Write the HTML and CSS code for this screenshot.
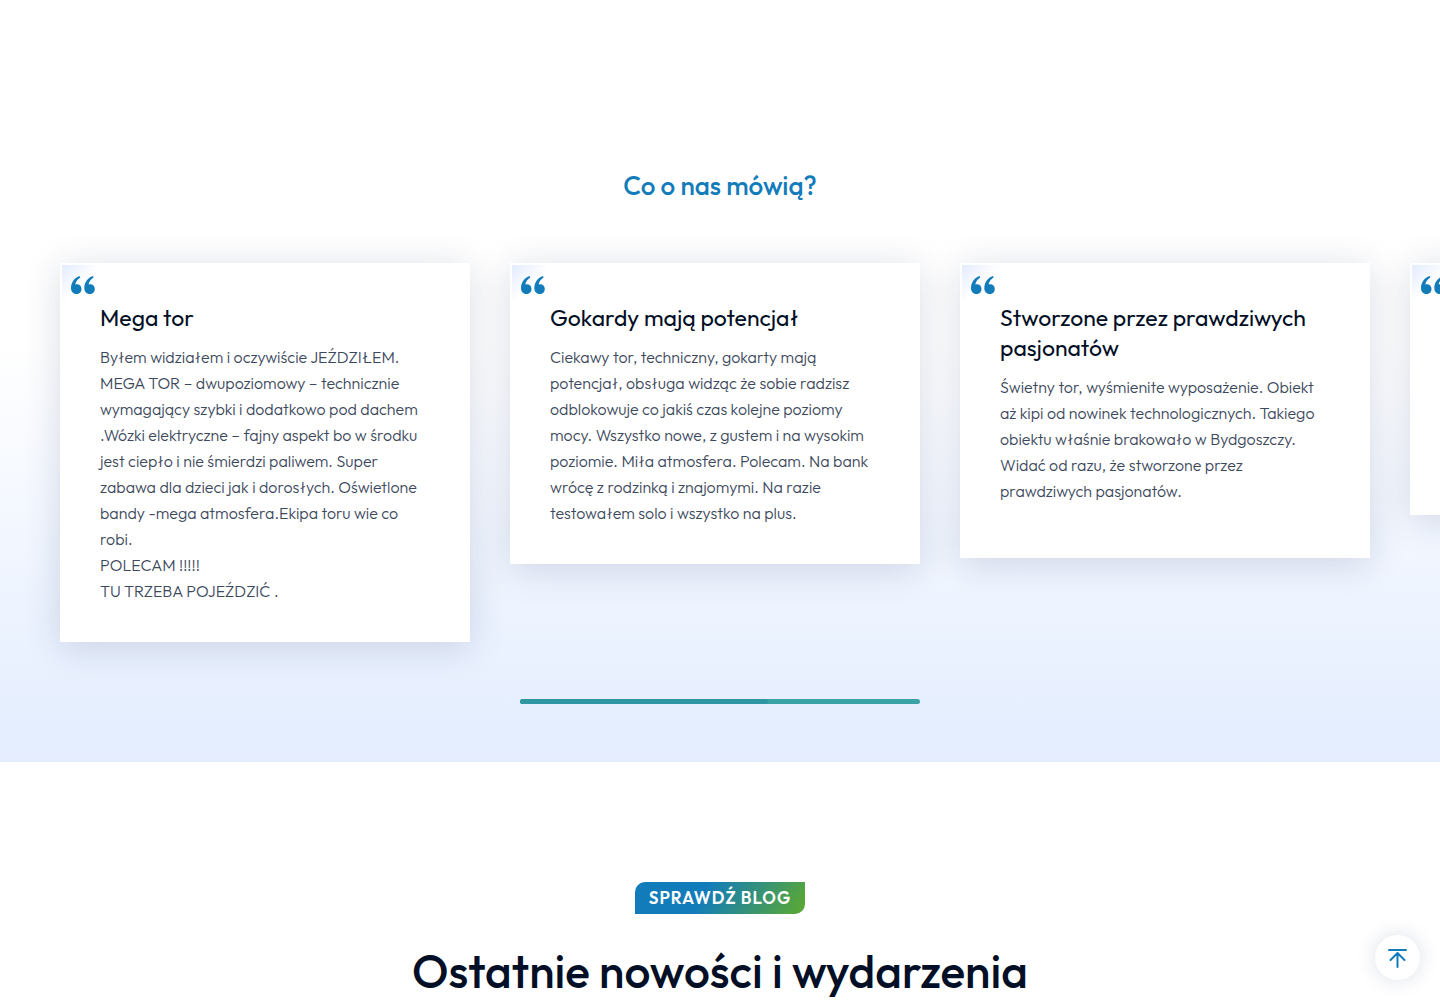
FILE: index.html
```html
<!DOCTYPE html>
<html lang="pl">

<head>
    <meta charset="UTF-8">
    <meta name="viewport" content="width=device-width, initial-scale=1">
    <title>Opinie i blog</title>
    <link rel="stylesheet" href="styles.css">
</head>

<body>

    <svg class="sprite" aria-hidden="true">
        <symbol id="quote" viewBox="0 0 24 18">
            <path d="M8.600 0C3.600 1.800 0 6.400 0 12c0 3.600 2.200 6 5.300 6 3 0 5.200-2.200 5.200-5.100 0-2.800-2-4.700-4.600-4.700-.5 0-1.100.1-1.600.3C4.800 5.800 6.600 3.200 9.300 1.500z" />
            <path d="M21.900 0C16.900 1.800 13.300 6.400 13.300 12c0 3.600 2.200 6 5.300 6 3 0 5.200-2.200 5.200-5.100 0-2.800-2-4.700-4.600-4.700-.5 0-1.100.1-1.600.3.5-2.700 2.300-5.300 5-7z" />
        </symbol>
    </svg>

    <!-- Opinie -->
    <section class="reviews">
        <h2 class="reviews-title">Co o nas mówią?</h2>

        <div class="slider">
            <article class="card">
                <span class="card-corner"><svg class="quote"><use href="#quote" /></svg></span>
                <h3 class="card-title">Mega tor</h3>
                <p class="card-text">Byłem widziałem i oczywiście JEŹDZIŁEM. MEGA TOR – dwupoziomowy – technicznie wymagający szybki i dodatkowo pod dachem .Wózki elektryczne – fajny aspekt bo w środku jest ciepło i nie śmierdzi paliwem. Super zabawa dla dzieci jak i dorosłych. Oświetlone bandy -mega atmosfera.Ekipa toru wie co robi.<br>
                    POLECAM !!!!!<br>
                    TU TRZEBA POJEŹDZIĆ .</p>
            </article>

            <article class="card">
                <span class="card-corner"><svg class="quote"><use href="#quote" /></svg></span>
                <h3 class="card-title">Gokardy mają potencjał</h3>
                <p class="card-text">Ciekawy tor, techniczny, gokarty mają potencjał, obsługa widząc że sobie radzisz odblokowuje co jakiś czas kolejne poziomy mocy. Wszystko nowe, z gustem i na wysokim poziomie. Miła atmosfera. Polecam. Na bank wrócę z rodzinką i znajomymi. Na razie testowałem solo i wszystko na plus.</p>
            </article>

            <article class="card">
                <span class="card-corner"><svg class="quote"><use href="#quote" /></svg></span>
                <h3 class="card-title">Stworzone przez prawdziwych pasjonatów</h3>
                <p class="card-text card-text-spaced">Świetny tor, wyśmienite wyposażenie. Obiekt aż kipi od nowinek technologicznych. Takiego obiektu właśnie brakowało w Bydgoszczy. Widać od razu, że stworzone przez prawdziwych pasjonatów.</p>
            </article>

            <article class="card">
                <span class="card-corner"><svg class="quote"><use href="#quote" /></svg></span>
            </article>
        </div>

        <div class="scrollbar">
            <div class="scrollbar-drag" style="width: 62%"></div>
        </div>
    </section>

    <!-- Blog -->
    <section class="blog">
        <span class="badge">SPRAWDŹ BLOG</span>
        <h2 class="blog-title">Ostatnie nowości i wydarzenia</h2>
    </section>

    <button class="to-top" type="button" aria-label="Do góry" onclick="window.scrollTo(0, 0)">
        <svg viewBox="0 0 20 20" width="20" height="20" fill="none" stroke="currentColor" stroke-width="2" stroke-linecap="round" stroke-linejoin="round">
            <path d="M2 2h17M10.500 19V5.500M3.500 12l7-7 7 7" />
        </svg>
    </button>

</body>

</html>
```

FILE: styles.css
```css
* {
    margin: 0;
    padding: 0;
    box-sizing: border-box;
}

body {
    font-family: Outfit, Lato, sans-serif;
    background: #fff;
    color: #020f26;
    overflow-x: hidden;
}

.sprite {
    display: none;
}

.reviews {
    padding: 168px 0 58px;
    background: linear-gradient(180deg, #fff 45%, #e3edff 100%);
    overflow: hidden;
}

.reviews-title {
    color: #127cbb;
    font-size: 26px;
    font-weight: 500;
    line-height: 36px;
    text-align: center;
}

.slider {
    display: flex;
    align-items: flex-start;
    gap: 40px;
    padding: 59px 60px 0;
}

.card {
    position: relative;
    flex: 0 0 410px;
    min-height: 252px;
    padding: 40px 40px 38px;
    background: #fff;
    box-shadow: 0 5px 35px rgba(16, 38, 90, 0.16);
}

.card-corner {
    position: absolute;
    top: 2px;
    left: 2px;
    width: 40px;
    height: 40px;
    padding: 11px 9px;
    background: linear-gradient(135deg, #e3ebff 0%, #fff 50%);
}

.quote {
    display: block;
    width: 24px;
    height: 18px;
    fill: #127cbb;
}

.card-title {
    margin-bottom: 11px;
    font-size: 23px;
    font-weight: 400;
    line-height: 30px;
}

.card-text {
    color: #3c485c;
    font-size: 16px;
    font-weight: 300;
    line-height: 26px;
}

.card-text-spaced {
    margin-bottom: 16px;
}

.scrollbar {
    width: 400px;
    max-width: 100%;
    height: 5px;
    margin: 57px auto 0;
    background: #3ba2a5;
    border-radius: 4px;
}

.scrollbar-drag {
    height: 5px;
    background: #2f96a2;
    border-radius: 4px;
}

.blog {
    display: flex;
    flex-direction: column;
    align-items: center;
    gap: 27px;
    padding-top: 120px;
}

.badge {
    padding: 0 14px;
    background: linear-gradient(120deg, #127cbb 40%, #57a639 95%);
    border-radius: 10px 0;
    color: #fff;
    font-size: 17px;
    font-weight: 600;
    letter-spacing: 1px;
    line-height: 32px;
}

.blog-title {
    font-size: 46px;
    font-weight: 500;
    line-height: 60px;
    text-align: center;
}

.to-top {
    position: fixed;
    right: 20px;
    bottom: 20px;
    display: flex;
    align-items: center;
    justify-content: center;
    width: 45px;
    height: 45px;
    padding-right: 1px;
    background: #fff;
    border: none;
    border-radius: 50%;
    box-shadow: 0 0 20px rgba(22, 46, 110, 0.15);
    color: #127cbb;
    cursor: pointer;
}
```
